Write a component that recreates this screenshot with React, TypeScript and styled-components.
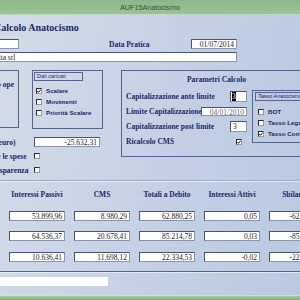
import React from 'react';
import styled, { createGlobalStyle } from 'styled-components';

const serif = `"Liberation Serif", "Times New Roman", serif`;
const sans = `"Liberation Sans", Arial, sans-serif`;
const navy = '#1c2868';

const GlobalStyle = createGlobalStyle`
  * { box-sizing: border-box; }
  html, body { margin: 0; padding: 0; }
  body { width: 300px; height: 300px; overflow: hidden; background: #c7d3e5; }
  #root { width: 300px; height: 300px; overflow: hidden; display: flex; flex-direction: column; }
`;

const TitleBar = styled.div`
  flex: none;
  height: 15px;
  background: linear-gradient(#8cb889, #9bc397);
  border-bottom: 1px solid #c4d8c0;
  display: flex;
  align-items: center;
  justify-content: center;
  font: 7.2px ${sans};
  color: #3c4b3c;
`;

const Body = styled.div`
  flex: 1;
  overflow: hidden;
  background: linear-gradient(100deg, #d3dbe7 0%, #c5d2e5 50%, #bac9e1 100%);
`;

const StatusBar = styled.div`
  flex: none;
  height: 5px;
  background: linear-gradient(#a9c9a4, #7fae7c);
  border-top: 1px solid #cfe0cb;
`;

/* the form is wider than the visible area and shifted left */
const Form = styled.div`
  width: 420px;
  margin-left: -60px;
  display: flex;
  flex-direction: column;
`;

const Heading = styled.div`
  margin-top: 7px;
  padding-left: 54px;
  height: 12px;
  line-height: 12px;
  font: bold 10px ${serif};
  color: ${navy};
  white-space: nowrap;
`;

const Row = styled.div<{ $top: number }>`
  display: flex;
  align-items: center;
  margin-top: ${(p) => p.$top}px;
  padding-left: 20px;
`;

const Label = styled.span<{ $w?: number; $ml?: number }>`
  flex: none;
  width: ${(p) => (p.$w ? `${p.$w}px` : 'auto')};
  margin-left: ${(p) => p.$ml ?? 0}px;
  font: bold 7.5px ${serif};
  color: ${navy};
  white-space: nowrap;
  overflow: hidden;
`;

const Field = styled.div<{ $w: number; $h?: number; $right?: boolean; $pl?: number; $muted?: boolean }>`
  flex: none;
  width: ${(p) => p.$w}px;
  height: ${(p) => p.$h ?? 10}px;
  line-height: ${(p) => (p.$h ?? 10) - 2}px;
  background: #fff;
  border: 1px solid #4a5374;
  border-right-color: #8c94ae;
  border-bottom-color: #8c94ae;
  padding: 0 2px 0 ${(p) => p.$pl ?? 2}px;
  text-align: ${(p) => (p.$right ? 'right' : 'left')};
  font: 7.5px ${serif};
  color: ${(p) => (p.$muted ? '#666' : '#1b1b1b')};
  white-space: nowrap;
  overflow: hidden;
`;

const Selected = styled.span`
  background: #000;
  color: #fff;
`;

const TopSection = styled.div`
  display: flex;
  align-items: flex-start;
  margin-top: 8px;
  padding-left: 20px;
`;

const LeftCol = styled.div`
  width: 143px;
  display: flex;
  flex-direction: column;
`;

const GroupsRow = styled.div`
  display: flex;
  gap: 13px;
`;

const Group = styled.div<{ $w: number; $h: number }>`
  flex: none;
  width: ${(p) => p.$w}px;
  height: ${(p) => p.$h}px;
  border: 1px solid #56628f;
`;

const SideNote = styled.div`
  margin-top: 9px;
  padding-right: 4px;
  text-align: right;
  font: bold 7.5px ${serif};
  color: ${navy};
  white-space: nowrap;
  overflow: hidden;
`;

const Caption = styled.div<{ $w: number }>`
  width: ${(p) => p.$w}px;
  height: 9px;
  margin: 1px 0 0 1px;
  border: 1px solid #56628f;
  padding-left: 2px;
  line-height: 7px;
  font: 5.5px ${sans};
  color: ${navy};
  white-space: nowrap;
  overflow: hidden;
`;

const CheckList = styled.div<{ $top: number; $pl: number }>`
  margin-top: ${(p) => p.$top}px;
  padding-left: ${(p) => p.$pl}px;
  display: flex;
  flex-direction: column;
`;

const CheckRow = styled.div`
  height: 11px;
  display: flex;
  align-items: center;
  gap: 4px;
  font: bold 6.2px ${sans};
  color: ${navy};
  white-space: nowrap;
`;

const Box = styled.span`
  flex: none;
  width: 6px;
  height: 6px;
  background: #fff;
  border: 1px solid #2c2c2c;
  border-right-color: #9a9a9a;
  border-bottom-color: #9a9a9a;
  display: flex;
  align-items: center;
  justify-content: center;

  svg {
    display: block;
  }
`;

const FieldGrid = styled.div`
  margin-top: 8px;
  display: grid;
  grid-template-columns: 74px auto;
  grid-auto-rows: 10px;
  row-gap: 4px;
  align-items: center;
`;

const ParamGroup = styled.div`
  flex: none;
  width: 191px;
  height: 87px;
  margin-left: 18px;
  border: 1px solid #56628f;
  padding: 0 4px;
`;

const ParamTitle = styled.div`
  margin-top: 4px;
  height: 10px;
  line-height: 10px;
  text-align: center;
  font: bold 7.5px ${serif};
  color: ${navy};
`;

const ParamBody = styled.div`
  display: flex;
  align-items: flex-start;
  margin-top: 4px;
`;

const ParamGrid = styled.div`
  width: 123px;
  display: grid;
  grid-template-columns: 1fr auto;
  grid-auto-rows: 15px;
  align-items: center;
  justify-items: end;

  & > span:nth-child(odd) {
    justify-self: start;
  }
`;

const CheckCell = styled.div`
  width: 17px;
  display: flex;
  justify-content: center;
`;

const TassoGroup = styled.div`
  flex: none;
  width: 55px;
  height: 53px;
  margin: 1px 0 0 5px;
  border: 1px solid #56628f;
  padding-left: 1px;
`;

const Etched = styled.div<{ $top: number; $dark?: boolean }>`
  margin-top: ${(p) => p.$top}px;
  height: 2px;
  border-top: 1px solid ${(p) => (p.$dark ? '#56628a' : '#9eacc4')};
  border-bottom: 1px solid #e4eaf3;
`;

const Results = styled.div`
  margin-top: 8px;
  padding-left: 69px;
  display: grid;
  grid-template-columns: repeat(5, 56px);
  grid-auto-rows: 10px;
  column-gap: 9px;
  row-gap: 10.5px;
`;

const ColHead = styled.div`
  text-align: center;
  line-height: 10px;
  font: bold 7.5px ${serif};
  color: ${navy};
  white-space: nowrap;
`;

const Footer = styled.div`
  margin: 4px 0 0 20px;
  width: 148px;
  height: 9px;
  background: #fff;
`;

const Check = ({ on }: { on?: boolean }) => (
  <Box>
    {on && (
      <svg width="4" height="4" viewBox="0 0 4 4">
        <path d="M0.3 2 L1.5 3.3 L3.8 0.6" fill="none" stroke="#000" strokeWidth="1" />
      </svg>
    )}
  </Box>
);

const results = [
  ['53.899,96', '8.980,29', '62.880,25', '0,05', '-62.880,20'],
  ['64.536,37', '20.678,41', '85.214,78', '0,03', '-85.214,75'],
  ['10.636,41', '11.698,12', '22.334,53', '-0,02', '-22.334,55'],
];

const headers = ['Interessi Passivi', 'CMS', 'Totali a Debito', 'Interessi Attivi', 'Sbilancio'];

export default function App() {
  return (
    <>
      <GlobalStyle />
      <TitleBar>AUF15Anatocismo</TitleBar>
      <Body>
        <Form>
          <Heading>Calcolo Anatocismo</Heading>
          <Row $top={5}>
            <Field $w={59} />
            <Label $w={82} $ml={90}>Data Pratica</Label>
            <Field $w={46} $right>01/07/2014</Field>
          </Row>
          <Row $top={3}>
            <Field $w={277} $pl={30}>Ditta srl</Field>
          </Row>

          <TopSection>
            <LeftCol>
              <GroupsRow>
                <Group $w={59} $h={58}>
                  <SideNote>Tipo ope</SideNote>
                </Group>
                <Group $w={71} $h={59}>
                  <Caption $w={49}>Dati caricati</Caption>
                  <CheckList $top={4} $pl={3}>
                    <CheckRow><Check on />Scalare</CheckRow>
                    <CheckRow><Check />Movimenti</CheckRow>
                    <CheckRow><Check />Priorità Scalare</CheckRow>
                  </CheckList>
                </Group>
              </GroupsRow>
              <FieldGrid>
                <Label>Saldo dare (euro)</Label>
                <Field $w={66} $right>-25.632,31</Field>
                <Label>Escludi tutte le spese</Label>
                <Check />
                <Label>Mancata trasparenza</Label>
                <Check />
              </FieldGrid>
            </LeftCol>

            <ParamGroup>
              <ParamTitle>Parametri Calcolo</ParamTitle>
              <ParamBody>
                <ParamGrid>
                  <Label>Capitalizzazione ante limite</Label>
                  <Field $w={17} $h={11} $pl={1}><Selected>3</Selected></Field>
                  <Label>Limite Capitalizzazione</Label>
                  <Field $w={46} $h={9} $right $muted>04/01/2010</Field>
                  <Label>Capitalizzazione post limite</Label>
                  <Field $w={17} $h={11}>3</Field>
                  <Label>Ricalcolo CMS</Label>
                  <CheckCell><Check on /></CheckCell>
                </ParamGrid>
                <TassoGroup>
                  <Caption $w={60}>Tasso Anatocismo</Caption>
                  <CheckList $top={5} $pl={4}>
                    <CheckRow><Check />BOT</CheckRow>
                    <CheckRow><Check />Tasso Legale</CheckRow>
                    <CheckRow><Check on />Tasso Convenzionale</CheckRow>
                  </CheckList>
                </TassoGroup>
              </ParamBody>
            </ParamGroup>
          </TopSection>

          <Etched $top={5} />

          <Results>
            {headers.map((h) => (
              <ColHead key={h}>{h}</ColHead>
            ))}
            {results.flat().map((v, i) => (
              <Field key={i} $w={56} $right>{v}</Field>
            ))}
          </Results>

          <Etched $top={9} $dark />
          <Footer />
        </Form>
      </Body>
      <StatusBar />
    </>
  );
}
